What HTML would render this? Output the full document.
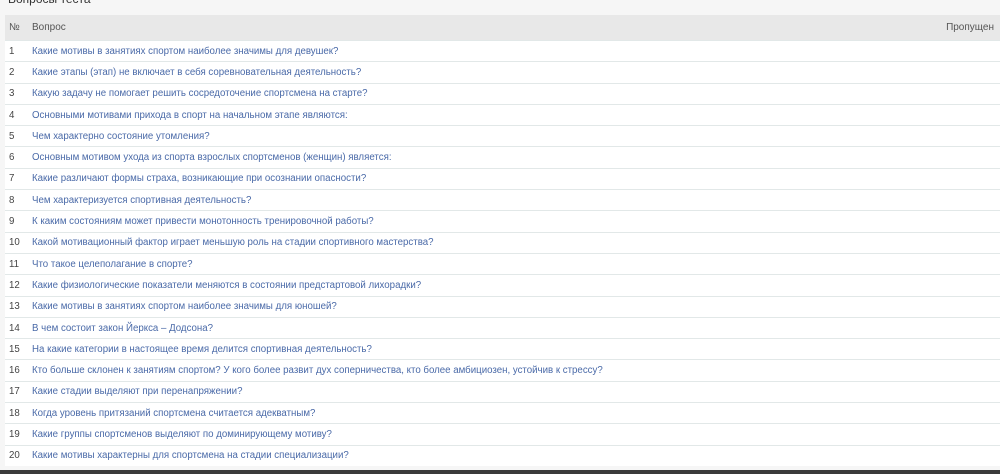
<!DOCTYPE html>
<html><head><meta charset="utf-8"><style>
body{margin:0;width:1000px;height:474px;overflow:hidden;background:#f6f6f6;font-family:"Liberation Sans",sans-serif;font-size:9.7px;position:relative}
.t{position:absolute;left:8px;top:-8px;font-size:12px;color:#333}
table{position:absolute;left:5px;top:15px;width:995px;border-collapse:collapse;background:#fff}
th{background:#e8e8e8;height:25px;font-weight:normal;color:#555;text-align:left;padding:0 4px;font-size:10px}
td{height:20.3px;border-top:1px solid #e2e8e8;padding:0 4px;color:#444}
td a{color:#4a6aa8;text-decoration:none}
.bar{position:absolute;left:0;top:470px;width:1000px;height:4px;background:#3a3a3a}
</style></head><body>
<div class="t">Вопросы теста</div>
<table>
<tr><th style="width:15px">№</th><th>Вопрос</th><th style="text-align:right;padding-right:6px">Пропущен</th></tr>
<tr><td>1</td><td><a>Какие мотивы в занятиях спортом наиболее значимы для девушек?</a></td><td></td></tr>
<tr><td>2</td><td><a>Какие этапы (этап) не включает в себя соревновательная деятельность?</a></td><td></td></tr>
<tr><td>3</td><td><a>Какую задачу не помогает решить сосредоточение спортсмена на старте?</a></td><td></td></tr>
<tr><td>4</td><td><a>Основными мотивами прихода в спорт на начальном этапе являются:</a></td><td></td></tr>
<tr><td>5</td><td><a>Чем характерно состояние утомления?</a></td><td></td></tr>
<tr><td>6</td><td><a>Основным мотивом ухода из спорта взрослых спортсменов (женщин) является:</a></td><td></td></tr>
<tr><td>7</td><td><a>Какие различают формы страха, возникающие при осознании опасности?</a></td><td></td></tr>
<tr><td>8</td><td><a>Чем характеризуется спортивная деятельность?</a></td><td></td></tr>
<tr><td>9</td><td><a>К каким состояниям может привести монотонность тренировочной работы?</a></td><td></td></tr>
<tr><td>10</td><td><a>Какой мотивационный фактор играет меньшую роль на стадии спортивного мастерства?</a></td><td></td></tr>
<tr><td>11</td><td><a>Что такое целеполагание в спорте?</a></td><td></td></tr>
<tr><td>12</td><td><a>Какие физиологические показатели меняются в состоянии предстартовой лихорадки?</a></td><td></td></tr>
<tr><td>13</td><td><a>Какие мотивы в занятиях спортом наиболее значимы для юношей?</a></td><td></td></tr>
<tr><td>14</td><td><a>В чем состоит закон Йеркса – Додсона?</a></td><td></td></tr>
<tr><td>15</td><td><a>На какие категории в настоящее время делится спортивная деятельность?</a></td><td></td></tr>
<tr><td>16</td><td><a>Кто больше склонен к занятиям спортом? У кого более развит дух соперничества, кто более амбициозен, устойчив к стрессу?</a></td><td></td></tr>
<tr><td>17</td><td><a>Какие стадии выделяют при перенапряжении?</a></td><td></td></tr>
<tr><td>18</td><td><a>Когда уровень притязаний спортсмена считается адекватным?</a></td><td></td></tr>
<tr><td>19</td><td><a>Какие группы спортсменов выделяют по доминирующему мотиву?</a></td><td></td></tr>
<tr><td>20</td><td><a>Какие мотивы характерны для спортсмена на стадии специализации?</a></td><td></td></tr>
</table>
<div class="bar"></div>
</body></html>
